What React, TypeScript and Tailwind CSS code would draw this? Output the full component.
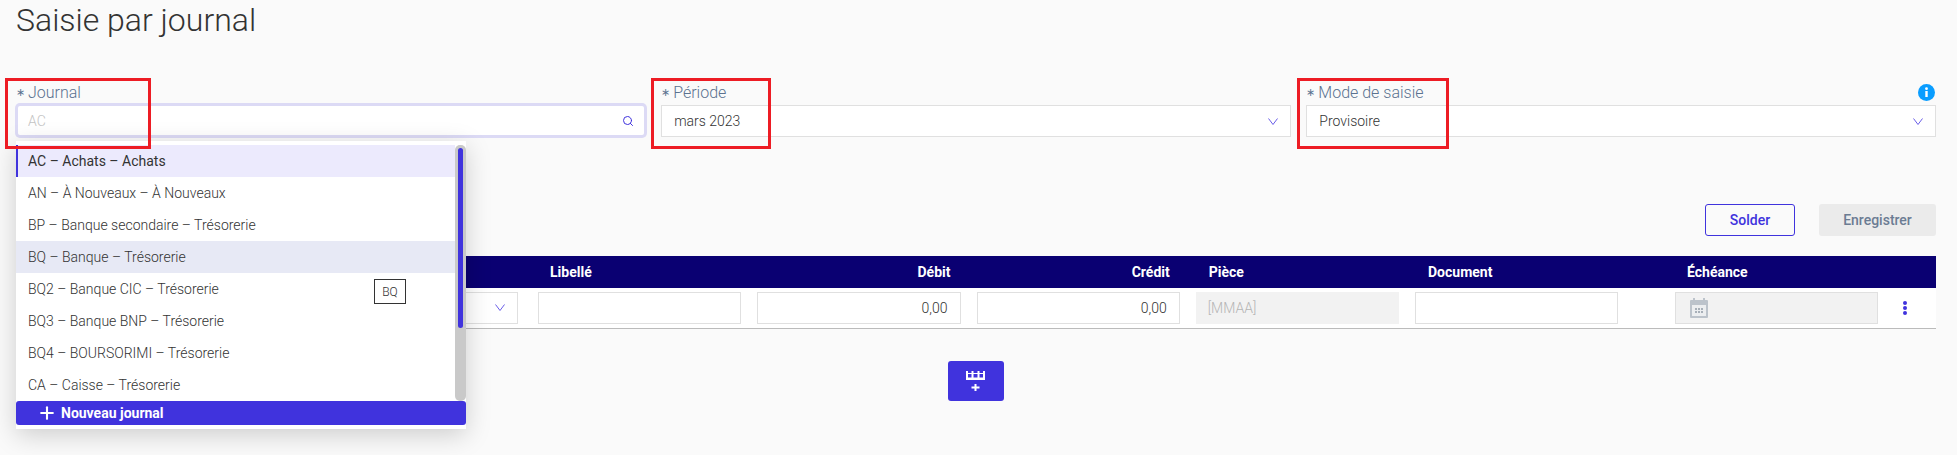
import React from 'react';
import { Plus, Search } from 'lucide-react';

const journals = [
    'AC – Achats – Achats',
    'AN – À Nouveaux – À Nouveaux',
    'BP – Banque secondaire – Trésorerie',
    'BQ – Banque – Trésorerie',
    'BQ2 – Banque CIC – Trésorerie',
    'BQ3 – Banque BNP – Trésorerie',
    'BQ4 – BOURSORIMI – Trésorerie',
    'CA – Caisse – Trésorerie',
];

const gridCols = 'grid grid-cols-[506px_203.25px_203.25px_203.25px_203.25px_203.25px_24.75px_203.25px_1fr] gap-x-4';
const inputBase = 'h-8 w-full border border-[#e0e0e0] bg-white px-3 text-sm font-light text-[#333] flex items-center';

const Chevron = () => (
    <svg width="10" height="7" viewBox="0 0 10 7" fill="none" stroke="#6a5ee8" strokeWidth="1">
        <path d="M0.5 0.5 L5 6.5 L9.5 0.5" />
    </svg>
);

const FieldLabel = ({ text }: { text: string }) => (
    <div className="flex h-[25px] items-center text-base font-light text-[#5b7290]">
        <span className="w-3 text-[11px] leading-none text-[#5b7290]">∗</span>
        {text}
    </div>
);

const RedBox = ({ className }: { className: string }) => (
    <div className={`pointer-events-none absolute top-[-2px] z-30 h-[71px] border-[3px] border-[#ed1c24] ${className}`} />
);

const JournalMenu = () => (
    <div className="absolute left-0 top-[61px] z-20 w-[450px] bg-white pt-1 pb-1 shadow-[0_6px_24px_rgba(0,0,0,0.18)]">
        <div className="relative">
            <ul className="mr-[11px]">
                {journals.map((j, i) => (
                    <li
                        key={j}
                        className={`flex h-8 items-center pb-px pl-3 text-sm ${
                            i === 0
                                ? 'border-l-2 border-[#4033dd] bg-[#eceafd] pl-[10px] font-normal text-[#333]'
                                : i === 3
                                  ? 'bg-[#e7e9f5] font-light text-[#333]'
                                  : 'font-light text-[#333]'
                        }`}
                    >
                        {j}
                    </li>
                ))}
            </ul>
            <div className="absolute right-0 top-0 h-full w-[11px] rounded-[5px] bg-[#c9c9c9]">
                <div className="mx-auto mt-[3px] h-[180px] w-[5px] rounded-[3px] bg-[#4033dd]" />
            </div>
            <div className="absolute left-[358px] top-[134px] flex h-[25px] w-8 items-center justify-center border border-[#333] bg-white text-xs font-light text-[#333]">
                BQ
            </div>
        </div>
        <button className="flex h-6 w-full items-center rounded-[3px] bg-[#4033dd] pl-[21px] text-sm font-bold text-white">
            <Plus size={20} strokeWidth={2.5} className="mr-[4px]" />
            Nouveau journal
        </button>
    </div>
);

const TableIcon = () => (
    <svg width="19" height="20" viewBox="0 0 19 20" fill="white">
        <rect x="0" y="0" width="2" height="9" />
        <rect x="5.5" y="0" width="2" height="9" />
        <rect x="11.5" y="0" width="2" height="9" />
        <rect x="17" y="0" width="2" height="9" />
        <rect x="0" y="2" width="19" height="1" />
        <rect x="0" y="6.5" width="19" height="2.5" />
        <rect x="8.5" y="13" width="2" height="7" />
        <rect x="5.5" y="15.5" width="8" height="2" />
    </svg>
);

const CalendarIcon = () => (
    <svg width="18" height="20" viewBox="0 0 18 20" fill="#bcc3cb">
        <rect x="3" y="0" width="2" height="3" />
        <rect x="13" y="0" width="2" height="3" />
        <path d="M1 2h16a1 1 0 0 1 1 1v16a1 1 0 0 1-1 1H1a1 1 0 0 1-1-1V3a1 1 0 0 1 1-1z" />
        <rect x="2" y="7" width="14" height="11" fill="#eceef0" />
        <g fill="#a7afb8">
            <rect x="5" y="10" width="2" height="2" />
            <rect x="8" y="10" width="2" height="2" />
            <rect x="11" y="10" width="2" height="2" />
            <rect x="5" y="13" width="2" height="2" />
            <rect x="8" y="13" width="2" height="2" />
            <rect x="11" y="13" width="2" height="2" />
        </g>
    </svg>
);

const InfoIcon = () => (
    <svg width="17" height="17" viewBox="0 0 17 17" className="mr-px">
        <circle cx="8.5" cy="8.5" r="8.5" fill="#0a9dff" />
        <circle cx="8.5" cy="4.7" r="1.4" fill="white" />
        <rect x="7.3" y="7" width="2.4" height="6" fill="white" />
    </svg>
);

export default function App() {
    return (
        <div className="h-[455px] w-[1957px] overflow-hidden bg-[#fafafa] pl-4 pr-[21px] font-['Roboto',sans-serif]">
            <h1 className="text-[32px] leading-10 font-light text-[#333]">Saisie par journal</h1>

            <div className="mt-10 grid grid-cols-3 gap-x-[15.5px]">
                <div className="relative">
                    <RedBox className="left-[-11px] w-[146px]" />
                    <FieldLabel text="Journal" />
                    <div className="mx-[2px] mt-px flex h-[29px] items-center justify-between rounded-[2px] bg-white pr-[10px] pl-[10px] text-sm font-light text-[#c4c4c4] ring-[3px] ring-[#dcdaf5]">
                        AC
                        <Search size={12} color="#4033dd" />
                    </div>
                    <JournalMenu />
                </div>
                <div className="relative">
                    <RedBox className="left-[-10px] w-[120px]" />
                    <FieldLabel text="Période" />
                    <div className={`${inputBase} justify-between`}>
                        mars 2023
                        <Chevron />
                    </div>
                </div>
                <div className="relative">
                    <RedBox className="left-[-9px] w-[152px]" />
                    <div className="flex items-center justify-between">
                        <FieldLabel text="Mode de saisie" />
                        <InfoIcon />
                    </div>
                    <div className={`${inputBase} justify-between`}>
                        Provisoire
                        <Chevron />
                    </div>
                </div>
            </div>

            <div className="mt-[67px] flex justify-end gap-6">
                <button className="h-8 w-[90px] rounded-[3px] border border-[#4033dd] text-sm font-medium text-[#4033dd]">
                    Solder
                </button>
                <button className="h-8 w-[117px] rounded-[3px] bg-[#ebebeb] text-sm font-medium text-[#6b7c93]">
                    Enregistrer
                </button>
            </div>

            <div className={`${gridCols} mt-5 h-8 items-center bg-[#0a0072] text-sm font-bold text-white`}>
                <div />
                <div className="pl-3">Libellé</div>
                <div className="pr-[10px] text-right">Débit</div>
                <div className="pr-[10px] text-right">Crédit</div>
                <div className="pl-[13px]">Pièce</div>
                <div className="pl-[13px]">Document</div>
                <div />
                <div className="pl-3">Échéance</div>
                <div />
            </div>
            <div className={`${gridCols} h-[41px] items-center border-b border-[#bbb] bg-white pb-px`}>
                <div className="pr-1">
                    <div className={`${inputBase} justify-end`}>
                        <Chevron />
                    </div>
                </div>
                <div className={inputBase} />
                <div className={`${inputBase} justify-end`}>0,00</div>
                <div className={`${inputBase} justify-end`}>0,00</div>
                <div className="flex h-8 items-center bg-[#f2f2f2] px-3 text-sm font-light text-[#b5b5b5]">[MMAA]</div>
                <div className={inputBase} />
                <div />
                <div className="flex h-8 items-center border border-[#e0e0e0] bg-[#f2f2f2] pl-[14px]">
                    <CalendarIcon />
                </div>
                <div className="flex flex-col items-start gap-px pl-[9px]">
                    <span className="h-1 w-1 rounded-full bg-[#4033dd]" />
                    <span className="h-1 w-1 rounded-full bg-[#4033dd]" />
                    <span className="h-1 w-1 rounded-full bg-[#4033dd]" />
                </div>
            </div>

            <div className="mt-8 flex justify-center pr-[1px]">
                <button className="flex h-10 w-14 items-center justify-center rounded-[3px] bg-[#4033dd]">
                    <TableIcon />
                </button>
            </div>
        </div>
    );
}
